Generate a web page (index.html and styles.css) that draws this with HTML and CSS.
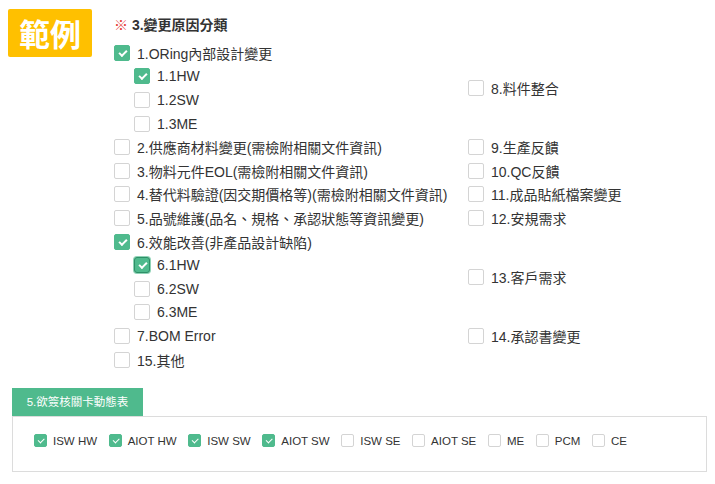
FILE: index.html
```html
<!DOCTYPE html>
<html lang="zh-Hant">
<head>
<meta charset="utf-8">
<title>範例</title>
<link rel="stylesheet" href="styles.css">
</head>
<body>
<div class="page">
  <div class="badge">範例</div>
  <div class="main">
    <div class="title"><span class="mark">※</span> 3.變更原因分類</div>
    <div class="grid">
      <div class="group">
        <div class="row"><span class="cb on"></span>1.ORing內部設計變更</div>
        <div class="sub">
          <div class="row"><span class="cb on"></span>1.1HW</div>
          <div class="row"><span class="cb"></span>1.2SW</div>
          <div class="row"><span class="cb"></span>1.3ME</div>
        </div>
      </div>
      <div class="right"><div class="row"><span class="cb"></span>8.料件整合</div></div>

      <div class="row"><span class="cb"></span>2.供應商材料變更(需檢附相關文件資訊)</div>
      <div class="right"><div class="row"><span class="cb"></span>9.生產反饋</div></div>

      <div class="row"><span class="cb"></span>3.物料元件EOL(需檢附相關文件資訊)</div>
      <div class="right"><div class="row"><span class="cb"></span>10.QC反饋</div></div>

      <div class="row"><span class="cb"></span>4.替代料驗證(因交期價格等)(需檢附相關文件資訊)</div>
      <div class="right"><div class="row"><span class="cb"></span>11.成品貼紙檔案變更</div></div>

      <div class="row"><span class="cb"></span>5.品號維護(品名、規格、承認狀態等資訊變更)</div>
      <div class="right"><div class="row"><span class="cb"></span>12.安規需求</div></div>

      <div class="group">
        <div class="row"><span class="cb on"></span>6.效能改善(非產品設計缺陷)</div>
        <div class="sub">
          <div class="row"><span class="cb on focus"></span>6.1HW</div>
          <div class="row"><span class="cb"></span>6.2SW</div>
          <div class="row"><span class="cb"></span>6.3ME</div>
        </div>
      </div>
      <div class="right"><div class="row"><span class="cb"></span>13.客戶需求</div></div>

      <div class="row"><span class="cb"></span>7.BOM Error</div>
      <div class="right"><div class="row"><span class="cb"></span>14.承認書變更</div></div>

      <div class="row"><span class="cb"></span>15.其他</div>
      <div class="right"></div>
    </div>
  </div>
</div>

<div class="sign">
  <div class="tab">5.欲簽核關卡動態表</div>
  <div class="panel">
    <span class="item"><span class="cb sm on"></span>ISW HW</span>
    <span class="item"><span class="cb sm on"></span>AIOT HW</span>
    <span class="item"><span class="cb sm on"></span>ISW SW</span>
    <span class="item"><span class="cb sm on"></span>AIOT SW</span>
    <span class="item"><span class="cb sm"></span>ISW SE</span>
    <span class="item"><span class="cb sm"></span>AIOT SE</span>
    <span class="item"><span class="cb sm"></span>ME</span>
    <span class="item"><span class="cb sm"></span>PCM</span>
    <span class="item"><span class="cb sm"></span>CE</span>
  </div>
</div>
</body>
</html>
```

FILE: styles.css
```css
* { box-sizing: border-box; }

body {
  margin: 0;
  background: #fff;
  color: #333;
  font-family: "Liberation Sans", "Noto Sans CJK TC", sans-serif;
  font-size: 14px;
}

.page {
  display: flex;
  align-items: flex-start;
  padding: 9px 0 0 8px;
}

.badge {
  width: 84px;
  height: 48px;
  background: #ffc000;
  color: #fff;
  border-radius: 2px;
  font-family: "Noto Sans CJK TC", sans-serif;
  font-weight: 700;
  font-size: 31px;
  line-height: 48px;
  text-align: center;
}

.main {
  margin-left: 22px;
}

.title {
  margin-top: 6px;
  height: 20px;
  line-height: 20px;
  font-weight: 700;
  font-size: 14px;
  color: #333;
}

.mark {
  color: #e53935;
  font-weight: 400;
}

.grid {
  margin-top: 6px;
  display: grid;
  grid-template-columns: 354px auto;
  align-items: center;
}

.row {
  display: flex;
  align-items: center;
  height: 23.6px;
  white-space: nowrap;
}

.sub {
  padding-left: 20px;
}

.cb {
  position: relative;
  flex: none;
  width: 16px;
  height: 16px;
  margin-right: 7px;
  border: 1px solid #d4d4d4;
  border-radius: 2px;
  background: #fff;
}

.cb.on {
  background: #4fba8d;
  border-color: #4fba8d;
}

.cb.on::after {
  content: "";
  position: absolute;
  left: 4px;
  top: 4px;
  width: 6px;
  height: 3px;
  border-left: 2px solid #fff;
  border-bottom: 2px solid #fff;
  transform: rotate(-45deg);
}

.cb.focus {
  border: 1px solid #2f8f68;
  border-radius: 3px;
  box-shadow: 0 0 0 1px #8fd3b6;
}

.sign {
  margin: 17px 8px 0 12px;
}

.tab {
  width: 131px;
  height: 28px;
  background: #4fba8d;
  color: #fff;
  font-size: 11.5px;
  line-height: 28px;
  text-align: center;
}

.panel {
  height: 56px;
  border: 1px solid #dcdcdc;
  display: flex;
  align-items: center;
  padding-left: 21px;
  padding-bottom: 7px;
  font-size: 11.5px;
  color: #333;
}

.item {
  display: flex;
  align-items: center;
  margin-right: 11.6px;
}

.cb.sm {
  width: 13px;
  height: 13px;
  margin-right: 6px;
}

.cb.sm.on::after {
  left: 3px;
  top: 3px;
  width: 5px;
  height: 2.5px;
  border-left-width: 1.5px;
  border-bottom-width: 1.5px;
}
```
